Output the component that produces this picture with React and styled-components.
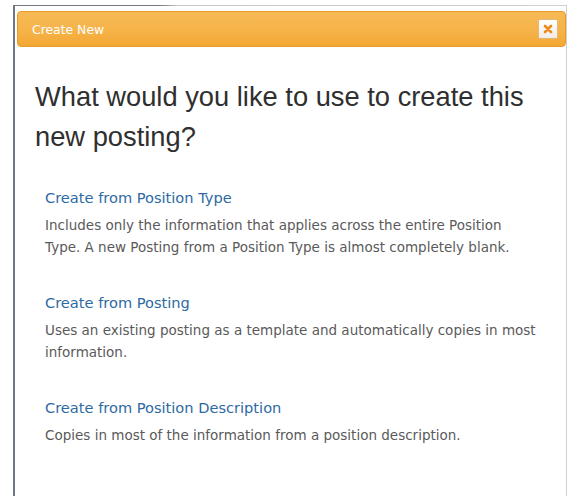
import React from "react";
import styled, { createGlobalStyle } from "styled-components";

const Global = createGlobalStyle`
  html, body { margin: 0; padding: 0; background: #ffffff; }
  body { height: 496px; overflow: hidden; }
`;

const Dialog = styled.div`
  box-sizing: border-box;
  margin: 5px 0 0 13px;
  width: 554px;
  height: 491px;
  border-left: 2px solid #8c8c8c;
  border-right: 1px solid #d8d8d8;
  border-top: 1px solid transparent;
  border-image: linear-gradient(to right, #6f7782 0, #6f7782 145px, #c9c9c9 165px, #d0d0d0 100%) 1;
  border-bottom: 0;
  padding: 5px 0 0 2px;
  background: #fff;
`;

const TitleBar = styled.div`
  box-sizing: border-box;
  height: 36px;
  display: flex;
  align-items: center;
  justify-content: space-between;
  padding: 0 7px 0 14px;
  border: 1px solid #e99b28;
  border-radius: 4px;
  background: linear-gradient(to bottom, #f7ba55 0%, #f6b44a 50%, #f3a834 100%);
`;

const Title = styled.span`
  font-family: "DejaVu Sans", sans-serif;
  font-size: 12.4px;
  color: #ffffff;
`;

const CloseButton = styled.button`
  box-sizing: border-box;
  width: 20px;
  height: 20px;
  padding: 0;
  display: flex;
  align-items: center;
  justify-content: center;
  border: 1px solid #e2b77a;
  border-radius: 2px;
  background: linear-gradient(to bottom, #ffffff, #f1ede6);
  cursor: pointer;
`;

const Body = styled.div`
  padding: 30px 0 0 18px;
`;

const Heading = styled.h1`
  margin: 0 0 32px;
  font-family: "Liberation Sans", Arial, sans-serif;
  font-weight: normal;
  font-size: 27.3px;
  line-height: 40px;
  color: #2f2f2f;
`;

const Options = styled.div`
  display: flex;
  flex-direction: column;
  gap: 36px;
  padding-left: 10px;
`;

const Option = styled.div`
  display: flex;
  flex-direction: column;
  gap: 7px;
`;

const OptionLink = styled.a`
  font-family: "DejaVu Sans", sans-serif;
  font-size: 14.6px;
  line-height: 18px;
  color: #2d6aa3;
  text-decoration: none;
  cursor: pointer;
`;

const OptionText = styled.p`
  margin: 0;
  max-width: 496px;
  min-height: 44px;
  font-family: "DejaVu Sans", sans-serif;
  font-size: 13.5px;
  line-height: 22px;
  color: #5a5a5a;
`;

const options = [
  {
    title: "Create from Position Type",
    text: "Includes only the information that applies across the entire Position Type. A new Posting from a Position Type is almost completely blank.",
  },
  {
    title: "Create from Posting",
    text: "Uses an existing posting as a template and automatically copies in most information.",
  },
  {
    title: "Create from Position Description",
    text: "Copies in most of the information from a position description.",
  },
];

export default function App() {
  return (
    <>
      <Global />
      <Dialog>
        <TitleBar>
          <Title>Create New</Title>
          <CloseButton aria-label="Close">
            <svg width="10" height="10" viewBox="0 0 10 10">
              <path d="M2 2 L8 8 M8 2 L2 8" stroke="#ee8a1c" strokeWidth="2.6" strokeLinecap="round" />
            </svg>
          </CloseButton>
        </TitleBar>
        <Body>
          <Heading>
            What would you like to use to create this
            <br />
            new posting?
          </Heading>
          <Options>
            {options.map((o) => (
              <Option key={o.title}>
                <OptionLink>{o.title}</OptionLink>
                <OptionText>{o.text}</OptionText>
              </Option>
            ))}
          </Options>
        </Body>
      </Dialog>
    </>
  );
}
